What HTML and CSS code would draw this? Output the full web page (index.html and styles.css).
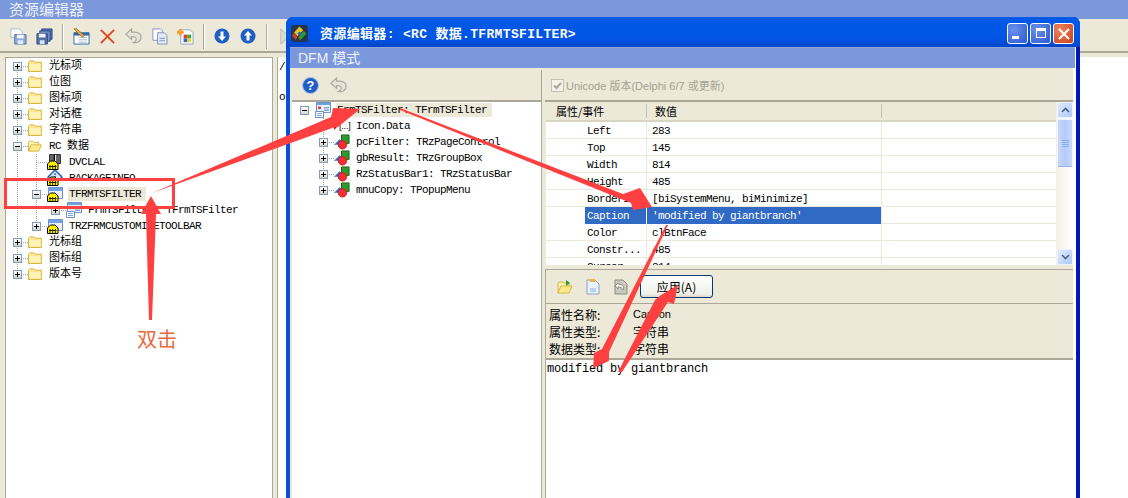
FILE: index.html
```html
<!DOCTYPE html>
<html lang="zh">
<head>
<meta charset="utf-8">
<title>资源编辑器</title>
<link rel="stylesheet" href="styles.css">
</head>
<body>
<svg class="defs" width="0" height="0">
  <defs>
    <symbol id="folder" viewBox="0 0 14 12"><path d="M.5 2.500 2 .8h3.500L7 2.200h6.300v9.300H.5z" fill="#FFE98F" stroke="#D8B440"/><path d="M1.500 4h11v6.500h-11z" fill="#FFF3B8"/></symbol>
    <symbol id="folderopen" viewBox="0 0 15 12"><path d="M.5 11.500V2L2 .8h3L6.500 2.200h5V5" fill="#FFF3B8" stroke="#D8B440"/><path d="M.5 11.500 3.500 4.800h11l-3 6.700z" fill="#FFE98F" stroke="#D8B440"/></symbol>
    <symbol id="lock" viewBox="0 0 16 16"><path d="M.5 10 3.500 7h4.500l3 3v5.500H.5z" fill="#FFF000" stroke="#000"/><path d="M2 12.500h7.500M3 11v4M5.700 11v4M8.400 11v4" stroke="#000" stroke-width=".8"/></symbol>
    <symbol id="res-bar" viewBox="0 0 16 16"><path d="M2.500.500h11v9h-11z" fill="#fff" stroke="#333"/><path d="M4 1v8M6 1v8M7.500 1v8M10 1v8M12 1v8" stroke="#000" stroke-width="1.200"/><use href="#lock"/></symbol>
    <symbol id="res-info" viewBox="0 0 16 16"><path d="M8 0l7 7-7 7-7-7z" fill="#DCE8FA" stroke="#2C62B4" stroke-width="1.500"/><path d="M7.300 3.500h1.500v1.500H7.300zM7.300 6h1.500v4H7.300z" fill="#1C4A9C"/><use href="#lock"/></symbol>
    <symbol id="res-win" viewBox="0 0 16 16"><path d="M1.500 1.500h14v11h-14z" fill="#EAF2FF" stroke="#6E93C8"/><path d="M2 2h13v3H2z" fill="#6FA2E0"/><use href="#lock"/></symbol>
    <symbol id="form" viewBox="0 0 16 16"><path d="M1.500.500h14v10h-14z" fill="#EAF2FF" stroke="#6E93C8"/><path d="M2 1h13v2H2z" fill="#6FA2E0"/><path d="M3 4.500h3v2.500H3z" fill="#F23A2E"/><path d="M9 5h5v1.500H9zM9 7.500h5V9H9z" fill="#7FA4D8"/><path d="M.5 9.500h8v6h-8z" fill="#fff" stroke="#6E93C8"/><path d="M2 11.500h5M2 13.500h5" stroke="#7FA4D8"/></symbol>
    <symbol id="comp" viewBox="0 0 17 16"><path d="M0 11 6 5 9 8v3z" fill="#2F6BD0"/><path d="M8 .5h8v9H8z" fill="#2F9A2E" stroke="#1B5E1A"/><circle cx="9" cy="11" r="4.500" fill="#F03030" stroke="#C92020"/></symbol>
    <symbol id="undo" viewBox="0 0 18 18"><path d="M7 1 1 6.500 7 12V9c3 0 5 1 5 3 0 1.500-1 2.500-3 3.500 5 .5 8-2 8-6 0-4-4-5.500-10-5z" fill="#E6E4D8" stroke="#ACAAA0" stroke-width="1.300"/></symbol>
  </defs>
</svg>

<div class="app">
  <header class="app-title">资源编辑器</header>
  <div class="toolbar">
    <svg class="ic" viewBox="0 0 18 18"><path d="M1 1h9l3 3v6H1z" fill="#fff" stroke="#A9B8D8"/><path d="M5 7h12v10H5z" fill="#8FA8D8" stroke="#5A73A8"/><path d="M7.500 7h7v4h-7z" fill="#F2F5FB"/><path d="M8 13h6v4H8z" fill="#E2E8F4"/></svg>
    <svg class="ic" viewBox="0 0 18 18"><path d="M6 1h11v11H6z" fill="#5678B8" stroke="#2D4685"/><path d="M4 3h11v11H4z" fill="#6E8EC4" stroke="#2D4685"/><path d="M1 6h11v11H1z" fill="#54709F" stroke="#2D4685"/><path d="M3 6h7v4H3z" fill="#EEF2FA"/><path d="M4 13h5v4H4z" fill="#DCE4F2"/></svg>
    <span class="sep"></span>
    <svg class="ic" viewBox="0 0 18 18"><path d="M1 5h16v12H1z" fill="#fff" stroke="#2A6BA8"/><path d="M1 5h16v3H1z" fill="#2A6BA8"/><path d="M6 10h9M6 12.500h9M6 15h9" stroke="#A5B7C9"/><path d="m1 1 2-1 9 8-2 2z" fill="#E8A33C" stroke="#9A5A12" stroke-width=".6"/></svg>
    <svg class="ic" viewBox="0 0 18 18"><path d="M2 2l14 14M16 2 2 16" stroke="#E6451C" stroke-width="2"/></svg>
    <svg class="ic"><use href="#undo"/></svg>
    <svg class="ic" viewBox="0 0 18 18"><path d="M2 1h8l2 2v10H2z" fill="#fff" stroke="#7C93BE"/><path d="M7 5h7l3 3v9H7z" fill="#E2EAF7" stroke="#7C93BE"/><path d="M9 11h6M9 13.500h6" stroke="#7C93BE"/></svg>
    <svg class="ic" viewBox="0 0 18 18"><path d="M4 2h10l3 3v12H4z" fill="#fff" stroke="#8AA0C8"/><path d="M7 7h4v4H7z" fill="#E33"/><path d="M11 7h4v4h-4z" fill="#3A3"/><path d="M7 11h4v4H7z" fill="#36C"/><path d="M11 11h4v4h-4z" fill="#EC3"/><path d="M0 3h2V1h3v2h2v3H5v2H2V6H0z" fill="#F6A02C"/></svg>
    <span class="sep"></span>
    <svg class="ic ic-arrow" viewBox="0 0 16 16"><circle cx="8" cy="8" r="7.500" fill="#1F5FC4"/><path d="M6.500 3.500h3v5H12L8 13 4 8.500h2.500z" fill="#fff"/></svg>
    <svg class="ic ic-arrow" viewBox="0 0 16 16"><circle cx="8" cy="8" r="7.500" fill="#1F5FC4"/><path d="M6.500 12.500h3v-5H12L8 3 4 7.500h2.500z" fill="#fff"/></svg>
    <span class="sep"></span>
    <svg class="ic" viewBox="0 0 18 18"><path d="M4 1l9 8-9 8z" fill="#DAD8CC" stroke="#BDBBAE"/></svg>
  </div>
  <div class="app-body">
    <div class="tree main-tree">
      <div class="row l0 first"><span class="plus"></span><svg class="i-folder"><use href="#folder"/></svg><span class="lbl cjk">光标项</span></div>
      <div class="row l0"><span class="plus"></span><svg class="i-folder"><use href="#folder"/></svg><span class="lbl cjk">位图</span></div>
      <div class="row l0"><span class="plus"></span><svg class="i-folder"><use href="#folder"/></svg><span class="lbl cjk">图标项</span></div>
      <div class="row l0"><span class="plus"></span><svg class="i-folder"><use href="#folder"/></svg><span class="lbl cjk">对话框</span></div>
      <div class="row l0"><span class="plus"></span><svg class="i-folder"><use href="#folder"/></svg><span class="lbl cjk">字符串</span></div>
      <div class="row l0"><span class="plus minus"></span><svg class="i-folder"><use href="#folderopen"/></svg><span class="lbl">RC <span class="cjk">数据</span></span></div>
      <div class="row l1 leaf"><span class="noplus"></span><svg class="i-res"><use href="#res-bar"/></svg><span class="lbl">DVCLAL</span></div>
      <div class="row l1 leaf"><span class="noplus"></span><svg class="i-res"><use href="#res-info"/></svg><span class="lbl">PACKAGEINFO</span></div>
      <div class="row l1"><span class="plus minus"></span><svg class="i-res"><use href="#res-win"/></svg><span class="lbl sel">TFRMTSFILTER</span></div>
      <div class="row l2"><span class="plus"></span><svg class="i-res"><use href="#form"/></svg><span class="lbl">FrmTSFilter: TFrmTSFilter</span></div>
      <div class="row l1 last1"><span class="plus"></span><svg class="i-res"><use href="#res-win"/></svg><span class="lbl">TRZFRMCUSTOMIZETOOLBAR</span></div>
      <div class="row l0"><span class="plus"></span><svg class="i-folder"><use href="#folder"/></svg><span class="lbl cjk">光标组</span></div>
      <div class="row l0"><span class="plus"></span><svg class="i-folder"><use href="#folder"/></svg><span class="lbl cjk">图标组</span></div>
      <div class="row l0 last0"><span class="plus"></span><svg class="i-folder"><use href="#folder"/></svg><span class="lbl cjk">版本号</span></div>
    </div>
    <div class="source">/<br><br>ol</div>
  </div>
</div>

<section class="dialog">
  <div class="dlg-title">
    <svg class="logo" viewBox="0 0 16 16"><rect width="16" height="16" rx="3" fill="#26344F"/><path d="M8 1.500 11.500 5 6 10.500 2.800 7z" fill="#EAC11E"/><path d="M12 5.500l2.500 2.800L8.500 14.500 6.800 11.500z" fill="#2F9A2E"/><path d="M2.500 7.800 6 11.300 4.500 14 1 10z" fill="#E23A20"/><path d="M8 6l2 2-2 2-2-2z" fill="#2A62C8"/></svg>
    <span class="dlg-caption">资源编辑器: &lt;RC 数据.TFRMTSFILTER&gt;</span>
    <span class="winbtns">
      <span class="wb"><span class="wb-min"></span></span>
      <span class="wb"><span class="wb-max"></span></span>
      <span class="wb wb-close"><svg viewBox="0 0 12 12"><path d="M1 1l10 10M11 1 1 11" stroke="#fff" stroke-width="2"/></svg></span>
    </span>
  </div>
  <div class="dlg-inner">
    <div class="dfm-bar">DFM 模式</div>
    <div class="dlg-body">
      <div class="left-pane">
        <div class="pane-tools">
          <svg class="ic" viewBox="0 0 16 16"><circle cx="8" cy="8" r="7.500" fill="#1F5FC4" stroke="#A9BDE6"/><text x="8" y="12" class="help">?</text></svg>
          <svg class="ic"><use href="#undo"/></svg>
        </div>
        <div class="tree dlg-tree">
          <div class="row d0"><span class="plus minus"></span><svg class="i-res"><use href="#form"/></svg><span class="lbl sel wide">FrmTSFilter: TFrmTSFilter</span></div>
          <div class="row d1 leaf first1"><span class="noplus"></span><span class="i-data"><svg class="tri" viewBox="0 0 4 8"><path d="M0 0l4 4-4 4z" fill="#E00"/></svg><span class="dots">[...]</span></span><span class="lbl">Icon.Data</span></div>
          <div class="row d1"><span class="plus"></span><svg class="i-res"><use href="#comp"/></svg><span class="lbl">pcFilter: TRzPageControl</span></div>
          <div class="row d1"><span class="plus"></span><svg class="i-res"><use href="#comp"/></svg><span class="lbl">gbResult: TRzGroupBox</span></div>
          <div class="row d1"><span class="plus"></span><svg class="i-res"><use href="#comp"/></svg><span class="lbl">RzStatusBar1: TRzStatusBar</span></div>
          <div class="row d1 last1"><span class="plus"></span><svg class="i-res"><use href="#comp"/></svg><span class="lbl">mnuCopy: TPopupMenu</span></div>
        </div>
      </div>
      <div class="right-pane">
        <div class="pane-tools uni">
          <span class="check"><svg viewBox="0 0 11 11"><path d="M2 5.500 4.500 8 9 3" fill="none" stroke="#A9A898" stroke-width="2"/></svg></span>
          <span>Unicode 版本(Delphi 6/7 或更新)</span>
        </div>
        <div class="grid-wrap">
          <div class="grid">
            <div class="g-head"><span class="h-name">属性/事件</span><span class="h-val">数值</span><span class="h-rest"></span></div>
            <div class="g-rows">
              <div class="g-row"><span class="n">Left</span><span class="v">283</span><span></span></div>
              <div class="g-row"><span class="n">Top</span><span class="v">145</span><span></span></div>
              <div class="g-row"><span class="n">Width</span><span class="v">814</span><span></span></div>
              <div class="g-row"><span class="n">Height</span><span class="v">485</span><span></span></div>
              <div class="g-row"><span class="n">BorderI...</span><span class="v">[biSystemMenu, biMinimize]</span><span></span></div>
              <div class="g-row on"><span class="n">Caption</span><span class="v">'modified by giantbranch'</span><span></span></div>
              <div class="g-row"><span class="n">Color</span><span class="v">clBtnFace</span><span></span></div>
              <div class="g-row"><span class="n">Constr...</span><span class="v">485</span><span></span></div>
              <div class="g-row"><span class="n">Cursor</span><span class="v">814</span><span></span></div>
            </div>
          </div>
          <div class="scroll">
            <span class="sb-btn"><svg viewBox="0 0 9 6"><path d="M1 5l3.500-3.500L8 5" fill="none" stroke="#4D6185" stroke-width="1.600"/></svg></span>
            <span class="sb-thumb"><i></i><i></i><i></i><i></i></span>
            <span class="sb-track"></span>
            <span class="sb-btn"><svg viewBox="0 0 9 6"><path d="M1 1l3.500 3.500L8 1" fill="none" stroke="#4D6185" stroke-width="1.600"/></svg></span>
          </div>
        </div>
        <div class="editor">
          <div class="edit-tools">
            <svg class="ic" viewBox="0 0 16 16"><path d="M1 14V4l2-1h3l1 1h5v3" fill="#FFF3B8" stroke="#D8B440"/><path d="M1 14l3-7h11l-3 7z" fill="#FFE98F" stroke="#D8B440"/><path d="M9 1l4 3-4 3V5z" fill="#2F9A2E"/></svg>
            <svg class="ic" viewBox="0 0 16 16"><path d="M2 1h8l4 4v10H2z" fill="#EAF2FF" stroke="#8AA0C8"/><path d="M5 0h5v3H5z" fill="#EDB53A"/><path d="M5 9h6v4H5z" fill="#BBD0EE"/></svg>
            <svg class="ic" viewBox="0 0 16 16"><path d="M2 1h8l4 4v10H2z" fill="#C9C8BE" stroke="#8E8D82"/><path d="M5 4 2 7l3 3V8c3 0 4 1 5 3 2-3 0-6-5-6z" fill="#EFEEE6" stroke="#8E8D82"/></svg>
            <button class="apply" type="button">应用(A)</button>
          </div>
          <dl class="props">
            <div class="prop"><dt>属性名称:</dt><dd class="lat">Caption</dd></div>
            <div class="prop"><dt>属性类型:</dt><dd>字符串</dd></div>
            <div class="prop"><dt>数据类型:</dt><dd>字符串</dd></div>
          </dl>
          <div class="value-box">modified by giantbranch</div>
        </div>
      </div>
    </div>
  </div>
</section>

<svg class="marks" viewBox="0 0 1128 498">
  <rect class="mark-box" x="5.500" y="179.500" width="168" height="28"/>
  <path class="arrow" d="M152 193 331 117 333 108 360 109 338 127 335 127z"/>
  <path class="arrow" d="M400 108 623 194 640 188 652 207 633 210 631 203 400 110z"/>
  <path class="arrow" d="M151 196 161 214 156 214 152 320 149 320 146 214 141 214z"/>
  <path class="arrow" d="M668 225 609 352 609 361 593 368 594 353 602 349 666 225z"/>
  <path class="arrow" d="M678 285 674 304 668 302 622 372 618 372 655 300 661 295z"/>
  <text class="mark-text" x="137" y="347">双击</text>
</svg>
</body>
</html>
```
FILE: styles.css
```css
* { box-sizing: border-box; }
html, body { margin: 0; padding: 0; }
body {
  width: 1128px; height: 498px; overflow: hidden; position: relative; background: #fff;
  font: 11px "Liberation Mono", "Noto Sans CJK SC", monospace; color: #000;
}
.defs { position: absolute; }
.app { display: flex; flex-direction: column; height: 498px; }
.app-title {
  height: 19px; background: #7B98DC; color: #EEF2FB; padding-left: 9px; flex: none;
  font: 15px/18px "Noto Sans CJK SC", sans-serif;
}
.toolbar {
  height: 34px; flex: none; background: #ECE9D8; display: flex; align-items: center; gap: 9px;
  padding: 2px 0 0 10px; border-bottom: 2px solid #ACA899;
}
.ic { width: 17px; height: 17px; flex: none; }
.ic-arrow { width: 16px; height: 16px; margin-right: 1px; }
.sep { width: 2px; height: 25px; background: #ACA899; border-right: 1px solid #fff; flex: none; }
.app-body { flex: 1; display: flex; gap: 4px; background: #ECE9D8; padding: 4px 0 0 5px; min-height: 0; }
.main-tree { width: 268px; background: #fff; border: 1px solid #ACA899; border-bottom: 0; }
.source { flex: 1; background: #fff; border-left: 1px solid #ACA899; padding: 3px 0 0 1px; line-height: 15px; font-size: 11px; }

.row {
  --v: repeating-linear-gradient(#A0A0A0 0 1px, transparent 1px 2px);
  --h: repeating-linear-gradient(90deg, #A0A0A0 0 1px, transparent 1px 2px);
  display: flex; align-items: center; height: 16px; white-space: nowrap;
  background-repeat: no-repeat;
}
.l0 { padding-left: 7px; background-image: var(--h), var(--v); background-position: 11px 8px, 11px 0; background-size: 17px 1px, 1px 100%; }
.l0.first { background-position: 11px 8px, 11px 8px; }
.l0.last0 { background-size: 17px 1px, 1px 8px; }
.l1 { padding-left: 26px; background-image: var(--h), var(--v), var(--v); background-position: 30px 8px, 11px 0, 30px 0; background-size: 17px 1px, 1px 100%, 1px 100%; }
.l1.last1 { background-size: 17px 1px, 1px 100%, 1px 8px; }
.l2 { padding-left: 45px; background-image: var(--h), var(--v), var(--v); background-position: 49px 8px, 11px 0, 30px 0; background-size: 17px 1px, 1px 100%, 1px 100%; }
.d0 { padding-left: 8px; }
.d1 { padding-left: 27px; background-image: var(--h), var(--v); background-position: 31px 8px, 31px 0; background-size: 13px 1px, 1px 100%; }
.d1.last1 { background-size: 13px 1px, 1px 8px; }
.plus {
  width: 9px; height: 9px; flex: none; border: 1px solid #7C9DBF; background: linear-gradient(#fff, #D5D2C5);
  position: relative;
}
.plus::before { content: ""; position: absolute; left: 1px; top: 3px; width: 5px; height: 1px; background: #000; }
.plus::after { content: ""; position: absolute; left: 3px; top: 1px; width: 1px; height: 5px; background: #000; }
.minus::after { display: none; }
.noplus { width: 9px; height: 9px; flex: none; }
.plus + svg, .noplus + svg, .noplus + span { margin-left: 6px; }
.i-folder { width: 14px; height: 12px; flex: none; margin-right: 6px; overflow: visible; background: #fff; }
.i-res { width: 16px; height: 16px; flex: none; margin-right: 5px; background: #fff; }
.i-data { width: 17px; flex: none; margin-right: 4px; display: flex; align-items: center; background: #fff; }
.dots { font: 9px "Liberation Sans", sans-serif; letter-spacing: -.2px; }
.tri { width: 4px; height: 8px; flex: none; margin-right: 1px; }
.lbl { font-size: 11px; letter-spacing: -.6px; line-height: 14px; padding: 0 1px; background: #fff; }
.cjk, .lbl.cjk { letter-spacing: 0; }
.lbl.sel { background: #ECE9D8; padding-right: 5px; }

.dialog {
  position: absolute; left: 286px; top: 17px; width: 794px; height: 500px; display: flex; flex-direction: column;
  border-radius: 7px 7px 0 0; background: linear-gradient(90deg, #0850DC, #0018B8); overflow: hidden;
}
.dlg-title {
  height: 30px; flex: none; display: flex; align-items: center; padding: 0 6px 0 5px;
  background: linear-gradient(#0A5BE6, #0058E6 18%, #0055E5 70%, #0344C8);
}
.logo { width: 17px; height: 17px; flex: none; margin: 3px 12px 0 0; }
.dlg-caption { color: #fff; font: bold 13px "Liberation Mono", "Noto Sans CJK SC", monospace; letter-spacing: .33px; flex: 1; white-space: nowrap; }
.winbtns { display: flex; gap: 2px; margin-top: 3px; }
.wb {
  width: 21px; height: 21px; border: 1px solid #fff; border-radius: 3px; position: relative; display: block;
  background: radial-gradient(circle at 30% 30%, #6C90EA, #2A58D2);
}
.wb-min { position: absolute; left: 4px; top: 12px; width: 7px; height: 3px; background: #fff; }
.wb-max { position: absolute; left: 5px; top: 4px; width: 10px; height: 10px; border: 1px solid #fff; border-top-width: 3px; }
.wb-close { background: radial-gradient(circle at 30% 30%, #F0845E, #C8401A); }
.wb-close svg { position: absolute; left: 4px; top: 4px; width: 12px; height: 12px; }
.dlg-inner { flex: 1; display: flex; flex-direction: column; margin: 0 4px 0 4px; background: #fff; border-right: 3px solid #fff; min-height: 0; }
.dfm-bar {
  height: 21px; flex: none; background: #7B98DC; color: #EEF2FB; padding-left: 8px; margin-right: -2px;
  font: 14px/20px "Liberation Sans", "Noto Sans CJK SC", sans-serif; border-top: 1px solid #8FA6D8;
}
.dlg-body { flex: 1; display: flex; gap: 3px; background: #ECE9D8; padding: 2px 0 0 2px; min-height: 0; }
.left-pane { width: 250px; flex: none; display: flex; flex-direction: column; background: #fff; border-right: 1px solid #ACA899; }
.pane-tools {
  height: 32px; flex: none; background: #ECE9D8; display: flex; align-items: center; gap: 11px; padding-left: 10px;
  border-bottom: 2px solid #ACA899;
}
.help { font: bold 12px "Liberation Sans", sans-serif; fill: #fff; text-anchor: middle; }
.dlg-tree { flex: 1; background: #fff; }
.right-pane { flex: 1; display: flex; flex-direction: column; min-width: 0; background: #ECE9D8; }
.uni { gap: 2px; padding-left: 6px; color: #A3A292; font: 11px "Liberation Sans", "Noto Sans CJK SC", sans-serif; }
.check { width: 13px; height: 13px; border: 1px solid #C2C1B4; background: #F3F1E8; display: block; }
.check svg { display: block; width: 11px; height: 11px; }
.grid-wrap { height: 163px; flex: none; display: flex; background: #fff; margin-left: 1px; }
.grid { flex: 1; display: flex; flex-direction: column; min-width: 0; }
.g-head {
  height: 20px; flex: none; display: grid; grid-template-columns: 101px 235px 1fr; background: #ECE9D8;
  border-bottom: 2px solid #D8D5C4; font: 11px/18px "Noto Sans CJK SC", sans-serif;
}
.h-name { padding-left: 10px; border-right: 1px solid #C5C2B2; margin: 2px 0; line-height: 14px; }
.h-val { padding-left: 8px; border-right: 1px solid #C5C2B2; margin: 2px 0; line-height: 14px; }
.g-rows { flex: 1; overflow: hidden; }
.g-row {
  height: 17px; display: grid; grid-template-columns: 101px 235px 1fr; border-bottom: 1px solid #ECE9D8;
  font-size: 11px; letter-spacing: -.6px; line-height: 16px;
}
.n { padding: 1px 0 0 41px; border-right: 1px solid #ECE9D8; white-space: nowrap; }
.v { padding: 1px 0 0 5px; border-right: 1px solid #ECE9D8; white-space: nowrap; }
.on .n { background: linear-gradient(90deg, #fff 39px, #316AC5 39px); color: #fff; border-right-color: #fff; }
.on .v { background: #316AC5; color: #fff; }
.scroll { width: 17px; flex: none; display: flex; flex-direction: column; background: linear-gradient(90deg, #F2F0E8, #fff); }
.sb-btn {
  width: 16px; height: 16px; flex: none; background: linear-gradient(135deg, #E1EAFE, #AEC8F7);
  border: 1px solid #EEF3FE; border-radius: 2px; display: flex; align-items: center; justify-content: center; margin-left: 1px;
}
.sb-btn svg { width: 9px; height: 6px; }
.sb-thumb {
  height: 48px; flex: none; margin: 1px 0 0 1px; width: 16px; border: 1px solid #EEF3FE; border-bottom-color: #98B1E4; border-radius: 2px;
  background: linear-gradient(90deg, #C9D8FC, #B5CBFA 50%, #C9D8FC); display: flex; flex-direction: column; align-items: center; justify-content: center; gap: 1px;
}
.sb-thumb i { width: 7px; height: 1px; background: #8CB0F8; }
.sb-track { flex: 1; }
.editor { flex: 1; display: flex; flex-direction: column; margin-top: 4px; min-height: 0; border-left: 1px solid #ACA899; border-top: 1px solid #ACA899; }
.edit-tools { height: 34px; flex: none; display: flex; align-items: center; gap: 12px; padding-left: 11px; border-bottom: 1px solid #ACA899; }
.edit-tools .ic { width: 16px; height: 16px; }
.apply {
  width: 73px; height: 23px; margin-left: -1px; padding: 0; border: 1px solid #003C74; border-radius: 3px;
  background: linear-gradient(#fff, #F0F0EA 85%, #DCD8CA); font: 12px "Noto Sans CJK SC", sans-serif; color: #000;
}
.props { margin: 0; padding: 0 0 0 3px; height: 54px; flex: none; display: flex; flex-direction: column; justify-content: center; }
.prop { display: flex; height: 17px; align-items: center; }
dt { width: 84px; font: 12px "Noto Sans CJK SC", sans-serif; }
dd { margin: 0; font: 12px "Noto Sans CJK SC", sans-serif; }
dd.lat { font: 11px "Liberation Sans", sans-serif; }
.value-box { flex: 1; background: #fff; border-top: 2px solid #ACA899; padding: 2px 0 0 1px; font: 12px/14px "Liberation Mono", monospace; letter-spacing: -.2px; }

.marks { position: absolute; left: 0; top: 0; width: 1128px; height: 498px; pointer-events: none; }
.mark-box { fill: none; stroke: #FF4040; stroke-width: 3; }
.arrow { fill: #FF4040; }
.mark-text { fill: #E8683C; font: 20px "Noto Sans CJK SC", sans-serif; }
```
